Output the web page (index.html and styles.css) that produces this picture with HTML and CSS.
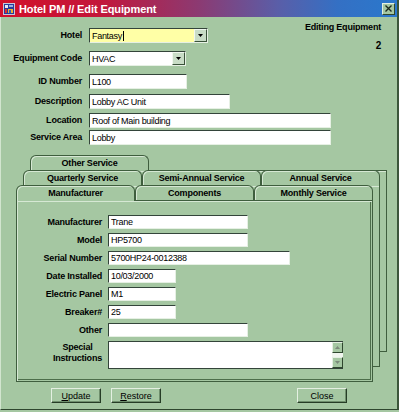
FILE: index.html
```html
<!DOCTYPE html>
<html lang="en">
<head>
  <meta charset="UTF-8">
  <title>Hotel PM // Edit Equipment</title>
  <link rel="stylesheet" href="styles.css">
</head>
<body>
  <div class="window">
    <div class="titlebar">
      <svg class="app-icon" width="12" height="12" viewBox="0 0 12 12">
        <rect x="0" y="0" width="12" height="12" fill="#c8c8d8"/>
        <rect x="1" y="1" width="10" height="10" fill="#2a3c9a"/>
        <rect x="2" y="2" width="3" height="3" fill="#e8e8f0"/>
        <rect x="6" y="2" width="4" height="2" fill="#9ab0e0"/>
        <rect x="2" y="6" width="2" height="4" fill="#d83030"/>
        <rect x="5" y="6" width="5" height="4" fill="#f0b030"/>
        <rect x="6" y="7" width="2" height="3" fill="#3060c0"/>
      </svg>
      <span class="title">Hotel PM // Edit Equipment</span>
      <span class="close-btn">
        <svg width="7" height="7" viewBox="0 0 7 7"><path d="M0.5 0.5 L6.5 6.5 M6.5 0.5 L0.5 6.5" stroke="#1d2a1d" stroke-width="1.4"/></svg>
      </span>
    </div>

    <div class="content">
      <div class="form">
        <label class="lbl">Hotel</label>
        <div class="combo hotel"><span class="val">Fantasy<span class="caret"></span></span><span class="drop"><svg width="5" height="3" viewBox="0 0 5 3"><path d="M0 0 H5 L2.5 3 Z" fill="#000"/></svg></span></div>

        <div class="status">
          <div>Editing Equipment</div>
          <div class="count">2</div>
        </div>

        <label class="lbl">Equipment Code</label>
        <div class="combo equip"><span class="val">HVAC</span><span class="drop"><svg width="5" height="3" viewBox="0 0 5 3"><path d="M0 0 H5 L2.5 3 Z" fill="#000"/></svg></span></div>

        <label class="lbl">ID Number</label>
        <input class="field w-id" value="L100">

        <label class="lbl">Description</label>
        <input class="field w-desc" value="Lobby AC Unit">

        <label class="lbl">Location</label>
        <input class="field w-long" value="Roof of Main building">

        <label class="lbl">Service Area</label>
        <input class="field w-long" value="Lobby">
      </div>

      <div class="tabstack">
        <div class="back back3"></div>
        <div class="tab-row row3">
          <div class="tab">Other Service</div>
        </div>
        <div class="back back2"></div>
        <div class="tab-row row2">
          <div class="tab">Quarterly Service</div>
          <div class="tab">Semi-Annual Service</div>
          <div class="tab">Annual Service</div>
        </div>
        <div class="panel">
          <div class="panel-form">
            <label class="lbl">Manufacturer</label>
            <input class="field w-mid" value="Trane">

            <label class="lbl">Model</label>
            <input class="field w-mid" value="HP5700">

            <label class="lbl">Serial Number</label>
            <input class="field w-serial" value="5700HP24-0012388">

            <label class="lbl">Date Installed</label>
            <input class="field w-short" value="10/03/2000">

            <label class="lbl">Electric Panel</label>
            <input class="field w-short" value="M1">

            <label class="lbl">Breaker#</label>
            <input class="field w-short" value="25">

            <label class="lbl">Other</label>
            <input class="field w-mid" value="">

            <label class="lbl lbl-multi">Special<br>Instructions</label>
            <div class="memo">
              <div class="memo-text"></div>
              <div class="memo-scroll">
                <span class="sbtn"><svg width="5" height="3" viewBox="0 0 5 3"><path d="M0 3 H5 L2.5 0 Z" fill="#7a8a7a"/></svg></span>
                <span class="sbtn"><svg width="5" height="3" viewBox="0 0 5 3"><path d="M0 0 H5 L2.5 3 Z" fill="#7a8a7a"/></svg></span>
              </div>
            </div>
          </div>
        </div>
        <div class="tab-row row1">
          <div class="tab active">Manufacturer</div>
          <div class="tab">Components</div>
          <div class="tab">Monthly Service</div>
        </div>
      </div>

      <div class="actions">
        <button class="btn"><u>U</u>pdate</button>
        <button class="btn"><u>R</u>estore</button>
        <button class="btn close">Close</button>
      </div>
    </div>
  </div>
</body>
</html>
```

FILE: styles.css
```css
* {
  box-sizing: border-box;
}
html, body {
  margin: 0;
  background: #a5c7a2;
}
body {
  font-family: "Liberation Sans", Arial, sans-serif;
  color: #000;
}
.window {
  width: 399px;
  height: 410px;
  background: #a5c7a2;
  border-left: 1px solid #d2e5cf;
  border-right: 2px solid #3c563b;
  border-bottom: 1px solid #2f472f;
}

/* title bar */
.titlebar {
  height: 17px;
  margin-left: -1px;
  display: flex;
  align-items: center;
  padding: 0 2px 0 3px;
  background: linear-gradient(to right, #d20f2a 0%, #c3163a 25%, #8c3a72 50%, #5a5ea8 70%, #3470c4 85%, #2a78cc 100%);
  color: #fff;
}
.app-icon {
  flex: none;
}
.title {
  margin-left: 4px;
  font-size: 11px;
  font-weight: bold;
  letter-spacing: -0.1px;
}
.close-btn {
  margin-left: auto;
  width: 13px;
  height: 12px;
  display: flex;
  align-items: center;
  justify-content: center;
  background: #a5c7a2;
  border: 1px solid;
  border-color: #e4f0e2 #2f472f #2f472f #e4f0e2;
}

/* shared text */
.lbl {
  justify-self: end;
  font-size: 9px;
  font-weight: bold;
  letter-spacing: -0.2px;
  line-height: 15px;
  white-space: nowrap;
}
.field, .combo, .memo {
  height: 15px;
  background: #fff;
  border: 1px solid;
  border-color: #33443a #e6f0e4 #e6f0e4 #33443a;
}
.field {
  padding: 0 2px;
  font-family: "Liberation Sans", Arial, sans-serif;
  font-size: 9px;
  letter-spacing: -0.3px;
  color: #000;
  outline: none;
}

/* header form */
.form {
  margin: 11px 16px 0 0;
  display: grid;
  grid-template-columns: 81px 1fr;
  grid-template-rows: 23px 23px 20px 19px 17px 15px;
  column-gap: 7px;
  justify-items: start;
  align-items: start;
}
.combo {
  display: flex;
  align-items: center;
  font-size: 9px;
  letter-spacing: -0.3px;
}
.combo .val {
  flex: 1;
  padding-left: 2px;
  display: flex;
  align-items: center;
}
.caret {
  display: inline-block;
  width: 1px;
  height: 10px;
  margin-left: 1px;
  background: #000;
}
.hotel {
  grid-column: 2;
  grid-row: 1;
  width: 119px;
  background: #ffffa6;
}
.equip {
  width: 97px;
}
.drop {
  width: 13px;
  height: 13px;
  display: flex;
  align-items: center;
  justify-content: center;
  background: #c8dcc6;
  border: 1px solid;
  border-color: #f0f7ef #3a523a #3a523a #f0f7ef;
}
.w-id {
  width: 98px;
}
.w-desc {
  width: 141px;
}
.w-long {
  width: 242px;
}
.status {
  grid-column: 2;
  grid-row: 1;
  justify-self: end;
  margin-top: -6px;
  text-align: right;
  font-size: 9px;
  font-weight: bold;
  letter-spacing: -0.2px;
  line-height: 11px;
  white-space: nowrap;
}
.count {
  margin-top: 7px;
  font-size: 10px;
}

/* tab stack */
.tabstack {
  display: grid;
  width: 371px;
  margin: 10px 0 0 15px;
  grid-template-columns: 7px 7px 343px 7px 7px;
  grid-template-rows: 15px 15px 15px 152px 15px 15px;
}
.back {
  background: #a5c7a2;
  border: 1px solid #3f5e3e;
  box-shadow: inset 1px 1px #d6e8d4;
}
.back3 {
  grid-column: 3 / 6;
  grid-row: 2 / 5;
}
.row3 {
  grid-column: 3 / 6;
  grid-row: 1 / 2;
}
.back2 {
  grid-column: 2 / 5;
  grid-row: 3 / 6;
}
.row2 {
  grid-column: 2 / 5;
  grid-row: 2 / 3;
}
.panel {
  grid-column: 1 / 4;
  grid-row: 4 / 7;
  padding-top: 14px;
  background: #a5c7a2;
  border: 1px solid #3f5e3e;
  box-shadow: inset 1px 1px #d6e8d4, inset -1px -1px #a5c7a2, inset -2px -2px #4d6e4b;
}
.row1 {
  grid-column: 1 / 4;
  grid-row: 3 / 4;
}
.tab-row {
  display: flex;
  align-items: flex-start;
}
.tab {
  flex: 0 0 119px;
  height: 16px;
  background: #a5c7a2;
  border: 1px solid #3f5e3e;
  border-bottom: none;
  border-radius: 6px 6px 0 0;
  box-shadow: inset 1px 1px #d6e8d4;
  font-size: 9px;
  font-weight: bold;
  letter-spacing: -0.2px;
  line-height: 14px;
  text-align: center;
}
.row1 .tab {
  height: 15px;
}
.row1 .tab.active {
  height: 16px;
}

/* panel form */
.panel-form {
  display: grid;
  grid-template-columns: 85px auto;
  grid-auto-rows: 18px;
  column-gap: 6px;
  justify-items: start;
  align-items: start;
}
.panel-form .field {
  height: 14px;
}
.panel-form .lbl {
  line-height: 14px;
}
.lbl-multi {
  line-height: 11px !important;
  text-align: center;
  margin-top: 1px;
}
.w-mid {
  width: 140px;
}
.w-serial {
  width: 182px;
}
.w-short {
  width: 68px;
}
.memo {
  width: 235px;
  height: 28px;
  display: flex;
  border-right: none;
  border-bottom-color: #33443a;
}
.memo-text {
  flex: 1;
}
.memo-scroll {
  width: 11px;
  display: flex;
  flex-direction: column;
  justify-content: space-between;
  background: #f0f5ef;
}
.sbtn {
  height: 11px;
  display: flex;
  align-items: center;
  justify-content: center;
  background: #a5c7a2;
  border: 1px solid;
  border-color: #e4f0e2 #2f472f #2f472f #e4f0e2;
}

/* bottom buttons */
.actions {
  display: flex;
  gap: 10px;
  margin-top: 6px;
  padding: 0 50px 0 50px;
}
.btn {
  width: 50px;
  height: 15px;
  padding: 0;
  background: #a5c7a2;
  border: 1px solid;
  border-color: #e4f0e2 #263c26 #263c26 #e4f0e2;
  box-shadow: inset -1px -1px #6f8f6d;
  font-family: "Liberation Sans", Arial, sans-serif;
  font-size: 9px;
  color: #000;
}
.btn.close {
  margin-left: auto;
}
```
